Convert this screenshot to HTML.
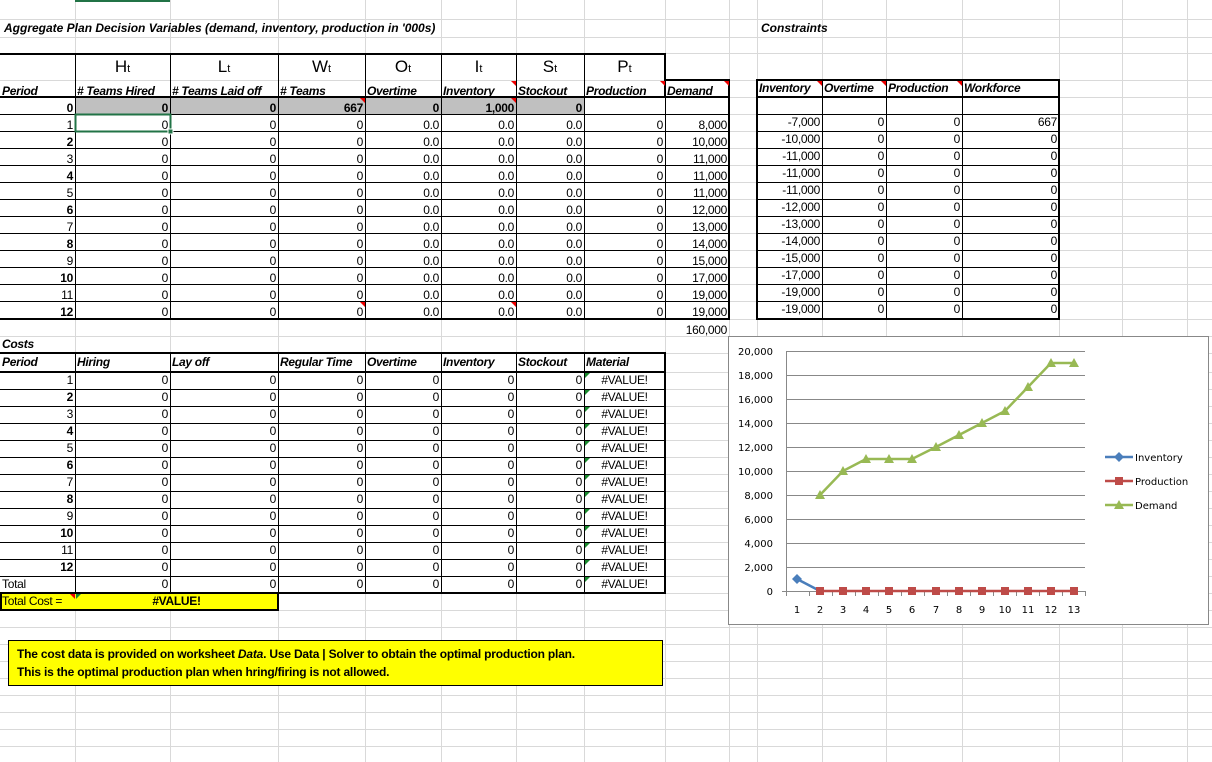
<!DOCTYPE html>
<html><head><meta charset="utf-8">
<style>
body{margin:0;width:1212px;height:762px;overflow:hidden;background:#fff;font-family:"Liberation Sans",Arial,sans-serif;font-size:12px;position:relative}
svg{position:absolute;left:0;top:0}
table{position:absolute;border-spacing:0;table-layout:fixed;}
td{padding:0 2px;height:17px;line-height:17px;white-space:nowrap;overflow:hidden;text-align:right;letter-spacing:-0.3px}
.bi{font-weight:bold;font-style:italic;text-align:left}
.b{font-weight:bold}
.c{text-align:center}
.l{text-align:left}
.big td{height:27px;line-height:27px;font-size:17px;text-align:center;letter-spacing:0}
.big sub{font-size:11px;vertical-align:baseline}
.t{position:absolute;white-space:nowrap}
</style></head><body>
<svg width="1212" height="762">
<g stroke="#d9d9d9" stroke-width="1">
<line x1="0" x2="1212" y1="19.5" y2="19.5"/><line x1="0" x2="1212" y1="37.5" y2="37.5"/><line x1="0" x2="1212" y1="53.5" y2="53.5"/><line x1="0" x2="1212" y1="80.5" y2="80.5"/>
<line x1="0" x2="1212" y1="97.5" y2="97.5"/><line x1="0" x2="1212" y1="114.5" y2="114.5"/><line x1="0" x2="1212" y1="131.5" y2="131.5"/><line x1="0" x2="1212" y1="148.5" y2="148.5"/><line x1="0" x2="1212" y1="165.5" y2="165.5"/><line x1="0" x2="1212" y1="182.5" y2="182.5"/><line x1="0" x2="1212" y1="199.5" y2="199.5"/><line x1="0" x2="1212" y1="216.5" y2="216.5"/><line x1="0" x2="1212" y1="233.5" y2="233.5"/><line x1="0" x2="1212" y1="250.5" y2="250.5"/><line x1="0" x2="1212" y1="267.5" y2="267.5"/><line x1="0" x2="1212" y1="284.5" y2="284.5"/><line x1="0" x2="1212" y1="301.5" y2="301.5"/><line x1="0" x2="1212" y1="319.5" y2="319.5"/><line x1="0" x2="1212" y1="336.5" y2="336.5"/><line x1="0" x2="1212" y1="353.5" y2="353.5"/>
<line x1="0" x2="1212" y1="372.5" y2="372.5"/><line x1="0" x2="1212" y1="389.5" y2="389.5"/><line x1="0" x2="1212" y1="406.5" y2="406.5"/><line x1="0" x2="1212" y1="423.5" y2="423.5"/><line x1="0" x2="1212" y1="440.5" y2="440.5"/><line x1="0" x2="1212" y1="457.5" y2="457.5"/><line x1="0" x2="1212" y1="474.5" y2="474.5"/><line x1="0" x2="1212" y1="491.5" y2="491.5"/><line x1="0" x2="1212" y1="508.5" y2="508.5"/><line x1="0" x2="1212" y1="525.5" y2="525.5"/><line x1="0" x2="1212" y1="542.5" y2="542.5"/><line x1="0" x2="1212" y1="559.5" y2="559.5"/><line x1="0" x2="1212" y1="576.5" y2="576.5"/><line x1="0" x2="1212" y1="593.5" y2="593.5"/><line x1="0" x2="1212" y1="610.5" y2="610.5"/><line x1="0" x2="1212" y1="627.5" y2="627.5"/><line x1="0" x2="1212" y1="644.5" y2="644.5"/><line x1="0" x2="1212" y1="661.5" y2="661.5"/><line x1="0" x2="1212" y1="678.5" y2="678.5"/><line x1="0" x2="1212" y1="695.5" y2="695.5"/><line x1="0" x2="1212" y1="712.5" y2="712.5"/><line x1="0" x2="1212" y1="729.5" y2="729.5"/><line x1="0" x2="1212" y1="746.5" y2="746.5"/>
<line y1="0" y2="762" x1="75.5" x2="75.5"/><line y1="0" y2="762" x1="170.5" x2="170.5"/><line y1="0" y2="762" x1="278.5" x2="278.5"/><line y1="0" y2="762" x1="365.5" x2="365.5"/><line y1="0" y2="762" x1="441.5" x2="441.5"/><line y1="0" y2="762" x1="516.5" x2="516.5"/><line y1="0" y2="762" x1="584.5" x2="584.5"/><line y1="0" y2="762" x1="665.5" x2="665.5"/><line y1="0" y2="762" x1="729.5" x2="729.5"/><line y1="0" y2="762" x1="757.5" x2="757.5"/><line y1="0" y2="762" x1="822.5" x2="822.5"/><line y1="0" y2="762" x1="886.5" x2="886.5"/><line y1="0" y2="762" x1="962.5" x2="962.5"/><line y1="0" y2="762" x1="1059.5" x2="1059.5"/><line y1="0" y2="762" x1="1122.5" x2="1122.5"/><line y1="0" y2="762" x1="1187.5" x2="1187.5"/>
</g>
<line x1="75" x2="170" y1="1" y2="1" stroke="#217346" stroke-width="2"/>
<rect x="75" y="97" width="509" height="17" fill="#c0c0c0"/>
<rect x="0" y="593" width="278" height="17" fill="#ffff00"/>
<rect x="8.5" y="640.5" width="654" height="45" fill="#ffff00" stroke="#000"/>
<g stroke="#000" stroke-width="1">
<line x1="75.5" x2="75.5" y1="53" y2="319"/><line x1="170.5" x2="170.5" y1="53" y2="319"/><line x1="278.5" x2="278.5" y1="53" y2="319"/><line x1="365.5" x2="365.5" y1="53" y2="319"/><line x1="441.5" x2="441.5" y1="53" y2="319"/><line x1="516.5" x2="516.5" y1="53" y2="319"/><line x1="584.5" x2="584.5" y1="53" y2="319"/>
<line x1="0" x2="729" y1="114.5" y2="114.5"/><line x1="0" x2="729" y1="131.5" y2="131.5"/><line x1="0" x2="729" y1="148.5" y2="148.5"/><line x1="0" x2="729" y1="165.5" y2="165.5"/><line x1="0" x2="729" y1="182.5" y2="182.5"/><line x1="0" x2="729" y1="199.5" y2="199.5"/><line x1="0" x2="729" y1="216.5" y2="216.5"/><line x1="0" x2="729" y1="233.5" y2="233.5"/><line x1="0" x2="729" y1="250.5" y2="250.5"/><line x1="0" x2="729" y1="267.5" y2="267.5"/><line x1="0" x2="729" y1="284.5" y2="284.5"/><line x1="0" x2="729" y1="301.5" y2="301.5"/>
<line x1="757" x2="1059" y1="114.5" y2="114.5"/><line x1="757" x2="1059" y1="131.5" y2="131.5"/><line x1="757" x2="1059" y1="148.5" y2="148.5"/><line x1="757" x2="1059" y1="165.5" y2="165.5"/><line x1="757" x2="1059" y1="182.5" y2="182.5"/><line x1="757" x2="1059" y1="199.5" y2="199.5"/><line x1="757" x2="1059" y1="216.5" y2="216.5"/><line x1="757" x2="1059" y1="233.5" y2="233.5"/><line x1="757" x2="1059" y1="250.5" y2="250.5"/><line x1="757" x2="1059" y1="267.5" y2="267.5"/><line x1="757" x2="1059" y1="284.5" y2="284.5"/><line x1="757" x2="1059" y1="301.5" y2="301.5"/>
<line x1="822.5" x2="822.5" y1="80" y2="319"/><line x1="886.5" x2="886.5" y1="80" y2="319"/><line x1="962.5" x2="962.5" y1="80" y2="319"/>
<line x1="665.5" x2="665.5" y1="97" y2="319"/>
<line x1="75.5" x2="75.5" y1="353" y2="593"/><line x1="170.5" x2="170.5" y1="353" y2="593"/><line x1="278.5" x2="278.5" y1="353" y2="593"/><line x1="365.5" x2="365.5" y1="353" y2="593"/><line x1="441.5" x2="441.5" y1="353" y2="593"/><line x1="516.5" x2="516.5" y1="353" y2="593"/><line x1="584.5" x2="584.5" y1="353" y2="593"/>
<line x1="0" x2="665" y1="389.5" y2="389.5"/><line x1="0" x2="665" y1="406.5" y2="406.5"/><line x1="0" x2="665" y1="423.5" y2="423.5"/><line x1="0" x2="665" y1="440.5" y2="440.5"/><line x1="0" x2="665" y1="457.5" y2="457.5"/><line x1="0" x2="665" y1="474.5" y2="474.5"/><line x1="0" x2="665" y1="491.5" y2="491.5"/><line x1="0" x2="665" y1="508.5" y2="508.5"/><line x1="0" x2="665" y1="525.5" y2="525.5"/><line x1="0" x2="665" y1="542.5" y2="542.5"/><line x1="0" x2="665" y1="559.5" y2="559.5"/><line x1="0" x2="665" y1="576.5" y2="576.5"/>
</g>
<g stroke="#000" stroke-width="2" fill="none">
<line x1="0" x2="666" y1="54" y2="54"/><line x1="0" x2="730" y1="97" y2="97"/><line x1="0" x2="730" y1="319" y2="319"/>
<line x1="665" x2="665" y1="53" y2="97"/><line x1="665" x2="730" y1="80" y2="80"/><line x1="729" x2="729" y1="79" y2="320"/>
<rect x="757" y="80" width="302" height="239"/><line x1="757" x2="1059" y1="97" y2="97"/>
<line x1="0" x2="666" y1="353" y2="353"/><line x1="0" x2="666" y1="372" y2="372"/><line x1="665" x2="665" y1="352" y2="594"/><line x1="278" x2="666" y1="593" y2="593"/>
<rect x="1" y="593" width="277" height="17"/>
</g>
<rect x="75.5" y="114.5" width="95" height="17" fill="none" stroke="#217346" stroke-width="2"/>
<rect x="168" y="129" width="5" height="5" fill="#217346" stroke="#fff" stroke-width="1"/>
<g fill="#e00">
<polygon points="360,98 365,98 365,103"/><polygon points="511,98 516,98 516,103"/><polygon points="511,81 516,81 516,86"/><polygon points="660,81 665,81 665,86"/><polygon points="724,81 729,81 729,86"/>
<polygon points="817,81 822,81 822,86"/><polygon points="881,81 886,81 886,86"/><polygon points="957,81 962,81 962,86"/>
<polygon points="360,302 365,302 365,307"/><polygon points="511,302 516,302 516,307"/><polygon points="70,594 75,594 75,599"/>
</g>
<g fill="#1a8a2e">
<polygon points="585,373 590,373 585,378"/><polygon points="585,390 590,390 585,395"/><polygon points="585,407 590,407 585,412"/><polygon points="585,424 590,424 585,429"/><polygon points="585,441 590,441 585,446"/><polygon points="585,458 590,458 585,463"/><polygon points="585,475 590,475 585,480"/><polygon points="585,492 590,492 585,497"/><polygon points="585,509 590,509 585,514"/><polygon points="585,526 590,526 585,531"/><polygon points="585,543 590,543 585,548"/><polygon points="585,560 590,560 585,565"/><polygon points="585,577 590,577 585,582"/><polygon points="76,594 81,594 76,599"/>
</g>
<rect x="728.5" y="336.5" width="480" height="288" fill="#fff" stroke="#888"/>
<g stroke="#888" stroke-width="1">
<line x1="786" x2="1085" y1="351.5" y2="351.5"/><line x1="786" x2="1085" y1="375.5" y2="375.5"/><line x1="786" x2="1085" y1="399.5" y2="399.5"/><line x1="786" x2="1085" y1="423.5" y2="423.5"/><line x1="786" x2="1085" y1="447.5" y2="447.5"/><line x1="786" x2="1085" y1="471.5" y2="471.5"/><line x1="786" x2="1085" y1="495.5" y2="495.5"/><line x1="786" x2="1085" y1="519.5" y2="519.5"/><line x1="786" x2="1085" y1="543.5" y2="543.5"/><line x1="786" x2="1085" y1="567.5" y2="567.5"/><line x1="782" x2="1085" y1="591.5" y2="591.5"/>
<line x1="786.5" x2="786.5" y1="351" y2="596"/>
<line x1="809.5" x2="809.5" y1="591" y2="596"/><line x1="832.5" x2="832.5" y1="591" y2="596"/><line x1="855.5" x2="855.5" y1="591" y2="596"/><line x1="878.5" x2="878.5" y1="591" y2="596"/><line x1="901.5" x2="901.5" y1="591" y2="596"/><line x1="924.5" x2="924.5" y1="591" y2="596"/><line x1="947.5" x2="947.5" y1="591" y2="596"/><line x1="970.5" x2="970.5" y1="591" y2="596"/><line x1="993.5" x2="993.5" y1="591" y2="596"/><line x1="1016.5" x2="1016.5" y1="591" y2="596"/><line x1="1039.5" x2="1039.5" y1="591" y2="596"/><line x1="1062.5" x2="1062.5" y1="591" y2="596"/><line x1="1085.5" x2="1085.5" y1="591" y2="596"/>
</g>
<g font-family="DejaVu Sans,sans-serif" font-size="10" fill="#000" text-anchor="end">
<text x="773" y="355">20,000</text><text x="773" y="379">18,000</text><text x="773" y="403">16,000</text><text x="773" y="427">14,000</text><text x="773" y="451">12,000</text><text x="773" y="475">10,000</text><text x="773" y="499">8,000</text><text x="773" y="523">6,000</text><text x="773" y="547">4,000</text><text x="773" y="571">2,000</text><text x="773" y="595">0</text>
</g>
<g font-family="DejaVu Sans,sans-serif" font-size="10" fill="#000" text-anchor="middle">
<text x="797" y="613">1</text><text x="820" y="613">2</text><text x="843" y="613">3</text><text x="866" y="613">4</text><text x="889" y="613">5</text><text x="912" y="613">6</text><text x="936" y="613">7</text><text x="959" y="613">8</text><text x="982" y="613">9</text><text x="1005" y="613">10</text><text x="1028" y="613">11</text><text x="1051" y="613">12</text><text x="1074" y="613">13</text>
</g>
<polyline points="797,579 820,591" fill="none" stroke="#4a7ebb" stroke-width="2.5"/>
<polygon points="797,574 802,579 797,584 792,579" fill="#4a7ebb"/>
<polyline points="820,591 1074,591" fill="none" stroke="#be4b48" stroke-width="2.5"/>
<g fill="#be4b48"><rect x="816" y="587" width="8" height="8"/><rect x="839" y="587" width="8" height="8"/><rect x="862" y="587" width="8" height="8"/><rect x="885" y="587" width="8" height="8"/><rect x="908" y="587" width="8" height="8"/><rect x="932" y="587" width="8" height="8"/><rect x="955" y="587" width="8" height="8"/><rect x="978" y="587" width="8" height="8"/><rect x="1001" y="587" width="8" height="8"/><rect x="1024" y="587" width="8" height="8"/><rect x="1047" y="587" width="8" height="8"/><rect x="1070" y="587" width="8" height="8"/></g>
<polyline points="820,495 843,471 866,459 889,459 912,459 936,447 959,435 982,423 1005,411 1028,387 1051,363 1074,363" fill="none" stroke="#98b954" stroke-width="2.5"/>
<g fill="#98b954"><polygon points="820,490 825,499 815,499"/><polygon points="843,466 848,475 838,475"/><polygon points="866,454 871,463 861,463"/><polygon points="889,454 894,463 884,463"/><polygon points="912,454 917,463 907,463"/><polygon points="936,442 941,451 931,451"/><polygon points="959,430 964,439 954,439"/><polygon points="982,418 987,427 977,427"/><polygon points="1005,406 1010,415 1000,415"/><polygon points="1028,382 1033,391 1023,391"/><polygon points="1051,358 1056,367 1046,367"/><polygon points="1074,358 1079,367 1069,367"/></g>
<line x1="1105" x2="1133" y1="457" y2="457" stroke="#4a7ebb" stroke-width="2.5"/><polygon points="1119,452 1124,457 1119,462 1114,457" fill="#4a7ebb"/>
<line x1="1105" x2="1133" y1="481" y2="481" stroke="#be4b48" stroke-width="2.5"/><rect x="1115" y="477" width="8" height="8" fill="#be4b48"/>
<line x1="1105" x2="1133" y1="505" y2="505" stroke="#98b954" stroke-width="2.5"/><polygon points="1119,500 1124,509 1114,509" fill="#98b954"/>
<g font-family="DejaVu Sans,sans-serif" font-size="10" fill="#000"><text x="1135" y="461">Inventory</text><text x="1135" y="485">Production</text><text x="1135" y="509">Demand</text></g>
</svg>

<div class="t" style="left:4px;top:20px;font-weight:bold;font-style:italic;line-height:17px">Aggregate Plan Decision Variables (demand, inventory, production in '000s)</div>
<div class="t" style="left:761px;top:20px;font-weight:bold;font-style:italic;line-height:17px">Constraints</div>

<table style="left:0;top:53px;width:729px">
<colgroup><col style="width:75px"><col style="width:95px"><col style="width:108px"><col style="width:87px"><col style="width:76px"><col style="width:75px"><col style="width:68px"><col style="width:81px"><col style="width:64px"></colgroup>
<tr class="big"><td></td><td>H<sub>t</sub></td><td>L<sub>t</sub></td><td>W<sub>t</sub></td><td>O<sub>t</sub></td><td>I<sub>t</sub></td><td>S<sub>t</sub></td><td>P<sub>t</sub></td><td></td></tr>
<tr><td class="bi">Period</td><td class="bi"># Teams Hired</td><td class="bi"># Teams Laid off</td><td class="bi"># Teams</td><td class="bi">Overtime</td><td class="bi">Inventory</td><td class="bi">Stockout</td><td class="bi">Production</td><td class="bi">Demand</td></tr>
<tr class="b"><td>0</td><td>0</td><td>0</td><td>667</td><td>0</td><td>1,000</td><td>0</td><td></td><td></td></tr>
<tr><td>1</td><td>0</td><td>0</td><td>0</td><td>0.0</td><td>0.0</td><td>0.0</td><td>0</td><td>8,000</td></tr>
<tr><td class="b">2</td><td>0</td><td>0</td><td>0</td><td>0.0</td><td>0.0</td><td>0.0</td><td>0</td><td>10,000</td></tr>
<tr><td>3</td><td>0</td><td>0</td><td>0</td><td>0.0</td><td>0.0</td><td>0.0</td><td>0</td><td>11,000</td></tr>
<tr><td class="b">4</td><td>0</td><td>0</td><td>0</td><td>0.0</td><td>0.0</td><td>0.0</td><td>0</td><td>11,000</td></tr>
<tr><td>5</td><td>0</td><td>0</td><td>0</td><td>0.0</td><td>0.0</td><td>0.0</td><td>0</td><td>11,000</td></tr>
<tr><td class="b">6</td><td>0</td><td>0</td><td>0</td><td>0.0</td><td>0.0</td><td>0.0</td><td>0</td><td>12,000</td></tr>
<tr><td>7</td><td>0</td><td>0</td><td>0</td><td>0.0</td><td>0.0</td><td>0.0</td><td>0</td><td>13,000</td></tr>
<tr><td class="b">8</td><td>0</td><td>0</td><td>0</td><td>0.0</td><td>0.0</td><td>0.0</td><td>0</td><td>14,000</td></tr>
<tr><td>9</td><td>0</td><td>0</td><td>0</td><td>0.0</td><td>0.0</td><td>0.0</td><td>0</td><td>15,000</td></tr>
<tr><td class="b">10</td><td>0</td><td>0</td><td>0</td><td>0.0</td><td>0.0</td><td>0.0</td><td>0</td><td>17,000</td></tr>
<tr><td>11</td><td>0</td><td>0</td><td>0</td><td>0.0</td><td>0.0</td><td>0.0</td><td>0</td><td>19,000</td></tr>
<tr><td class="b">12</td><td>0</td><td>0</td><td>0</td><td>0.0</td><td>0.0</td><td>0.0</td><td>0</td><td>19,000</td></tr>
<tr><td style="height:18px"></td><td></td><td></td><td></td><td></td><td></td><td></td><td></td><td>160,000</td></tr>
</table>

<table style="left:757px;top:80px;width:302px">
<colgroup><col style="width:65px"><col style="width:64px"><col style="width:76px"><col style="width:97px"></colgroup>
<tr><td class="bi">Inventory</td><td class="bi">Overtime</td><td class="bi">Production</td><td class="bi">Workforce</td></tr>
<tr><td></td><td></td><td></td><td></td></tr>
<tr><td>-7,000</td><td>0</td><td>0</td><td>667</td></tr>
<tr><td>-10,000</td><td>0</td><td>0</td><td>0</td></tr>
<tr><td>-11,000</td><td>0</td><td>0</td><td>0</td></tr>
<tr><td>-11,000</td><td>0</td><td>0</td><td>0</td></tr>
<tr><td>-11,000</td><td>0</td><td>0</td><td>0</td></tr>
<tr><td>-12,000</td><td>0</td><td>0</td><td>0</td></tr>
<tr><td>-13,000</td><td>0</td><td>0</td><td>0</td></tr>
<tr><td>-14,000</td><td>0</td><td>0</td><td>0</td></tr>
<tr><td>-15,000</td><td>0</td><td>0</td><td>0</td></tr>
<tr><td>-17,000</td><td>0</td><td>0</td><td>0</td></tr>
<tr><td>-19,000</td><td>0</td><td>0</td><td>0</td></tr>
<tr><td>-19,000</td><td>0</td><td>0</td><td>0</td></tr>
</table>

<table style="left:0;top:336px;width:665px">
<colgroup><col style="width:75px"><col style="width:95px"><col style="width:108px"><col style="width:87px"><col style="width:76px"><col style="width:75px"><col style="width:68px"><col style="width:81px"></colgroup>
<tr><td class="bi">Costs</td><td></td><td></td><td></td><td></td><td></td><td></td><td></td></tr>
<tr><td class="bi" style="height:19px;line-height:19px">Period</td><td class="bi">Hiring</td><td class="bi">Lay off</td><td class="bi">Regular Time</td><td class="bi">Overtime</td><td class="bi">Inventory</td><td class="bi">Stockout</td><td class="bi">Material</td></tr>
<tr><td>1</td><td>0</td><td>0</td><td>0</td><td>0</td><td>0</td><td>0</td><td class="c">#VALUE!</td></tr>
<tr><td class="b">2</td><td>0</td><td>0</td><td>0</td><td>0</td><td>0</td><td>0</td><td class="c">#VALUE!</td></tr>
<tr><td>3</td><td>0</td><td>0</td><td>0</td><td>0</td><td>0</td><td>0</td><td class="c">#VALUE!</td></tr>
<tr><td class="b">4</td><td>0</td><td>0</td><td>0</td><td>0</td><td>0</td><td>0</td><td class="c">#VALUE!</td></tr>
<tr><td>5</td><td>0</td><td>0</td><td>0</td><td>0</td><td>0</td><td>0</td><td class="c">#VALUE!</td></tr>
<tr><td class="b">6</td><td>0</td><td>0</td><td>0</td><td>0</td><td>0</td><td>0</td><td class="c">#VALUE!</td></tr>
<tr><td>7</td><td>0</td><td>0</td><td>0</td><td>0</td><td>0</td><td>0</td><td class="c">#VALUE!</td></tr>
<tr><td class="b">8</td><td>0</td><td>0</td><td>0</td><td>0</td><td>0</td><td>0</td><td class="c">#VALUE!</td></tr>
<tr><td>9</td><td>0</td><td>0</td><td>0</td><td>0</td><td>0</td><td>0</td><td class="c">#VALUE!</td></tr>
<tr><td class="b">10</td><td>0</td><td>0</td><td>0</td><td>0</td><td>0</td><td>0</td><td class="c">#VALUE!</td></tr>
<tr><td>11</td><td>0</td><td>0</td><td>0</td><td>0</td><td>0</td><td>0</td><td class="c">#VALUE!</td></tr>
<tr><td class="b">12</td><td>0</td><td>0</td><td>0</td><td>0</td><td>0</td><td>0</td><td class="c">#VALUE!</td></tr>
<tr><td class="l">Total</td><td>0</td><td>0</td><td>0</td><td>0</td><td>0</td><td>0</td><td class="c">#VALUE!</td></tr>
<tr><td class="l" style="overflow:visible">Total Cost =</td><td colspan="2" class="b c">#VALUE!</td><td></td><td></td><td></td><td></td><td></td></tr>
</table>

<div class="t" style="left:17px;top:645px;font-weight:bold;font-size:12px;line-height:18px;letter-spacing:-0.2px">The cost data is provided on worksheet <i>Data</i>. Use Data | Solver to obtain the optimal production plan.<br>This is the optimal production plan when hring/firing is not allowed.</div>
</body></html>
